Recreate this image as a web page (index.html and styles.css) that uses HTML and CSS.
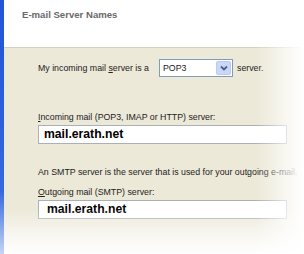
FILE: index.html
```html
<!DOCTYPE html>
<html lang="en">
<head>
    <meta charset="UTF-8">
    <title>E-mail Server Names</title>
    <link rel="stylesheet" href="styles.css">
</head>
<body>
    <div class="window">
        <div class="header">
            <div class="title">E-mail Server Names</div>
        </div>
        <div class="panel">
            <div class="row">
                <span>My incoming mail <u>s</u>erver is a</span>
                <div class="select">
                    <span class="select-value">POP3</span>
                    <span class="select-btn">
                        <svg width="8" height="6" viewBox="0 0 8 6"><path d="M1 1.5 L4 4.5 L7 1.5" fill="none" stroke="#4d6185" stroke-width="1.8"/></svg>
                    </span>
                </div>
                <span>server.</span>
            </div>
            <div class="field">
                <label><u>I</u>ncoming mail (POP3, IMAP or HTTP) server:</label>
                <div class="textbox">mail.erath.net</div>
            </div>
            <div class="field smtp">
                <div class="note">An SMTP server is the server that is used for your outgoing e-mail.</div>
                <label><u>O</u>utgoing mail (SMTP) server:</label>
                <div class="textbox second">mail.erath.net</div>
            </div>
        </div>
        <div class="fade"></div>
    </div>
</body>
</html>
```

FILE: styles.css
```css
body {
    margin: 0;
    background-color: #fff;
    font-family: 'Liberation Sans', Arial, sans-serif;
    font-size: 8.8px;
    line-height: 10px;
    color: #222;
}
.window {
    position: relative;
    width: 304px;
    height: 254px;
    overflow: hidden;
    border-left: 4px solid #2458d8;
    border-image: linear-gradient(#1f55d8, #3268e0 75%, #c8d6f4) 1;
    box-sizing: border-box;
}
.header {
    height: 48px;
    background-color: #fff;
    border-bottom: 1px solid #d6d2c2;
    padding: 10px 0 0 18px;
    box-sizing: border-box;
}
.title {
    font-size: 9.6px;
    font-weight: bold;
    color: #6a6a6a;
}
.panel {
    background-color: #ece9d8;
    height: 206px;
    padding: 11px 0 0 34px;
    box-sizing: border-box;
}
.row {
    display: flex;
    align-items: center;
    gap: 4px;
}
.select {
    display: flex;
    align-items: center;
    width: 74px;
    height: 18px;
    margin-left: 6px;
    border: 1px solid #7f9db9;
    background-color: #fff;
    box-sizing: border-box;
}
.select-value {
    flex: 1;
    padding-left: 3px;
}
.select-btn {
    width: 15px;
    height: 14px;
    margin-right: 1px;
    display: flex;
    align-items: center;
    justify-content: center;
    background-color: #c9d8f8;
    border: 1px solid #b9cbf3;
    border-radius: 2px;
    box-sizing: border-box;
}
.field {
    margin-top: 35px;
}
.field label {
    display: block;
    margin-bottom: 3px;
}
.smtp {
    margin-top: 23px;
}
.note {
    margin-bottom: 10px;
    white-space: nowrap;
}
.textbox {
    width: 249px;
    height: 19px;
    border: 1px solid #a9b0b8;
    background-color: #fff;
    font-size: 12.2px;
    font-weight: bold;
    color: #000;
    padding-left: 5px;
    line-height: 17px;
    box-sizing: border-box;
}
.textbox.second {
    padding-left: 8px;
}
.fade {
    position: absolute;
    left: 0;
    top: 0;
    right: 0;
    bottom: 0;
    pointer-events: none;
    background:
        linear-gradient(to bottom, rgba(255,255,255,0) 82%, rgba(255,255,255,0.6) 92%, rgba(255,255,255,1) 100%),
        linear-gradient(to right, rgba(255,255,255,0) 84%, rgba(255,255,255,0.7) 95%, rgba(255,255,255,1) 100%);
}
```
